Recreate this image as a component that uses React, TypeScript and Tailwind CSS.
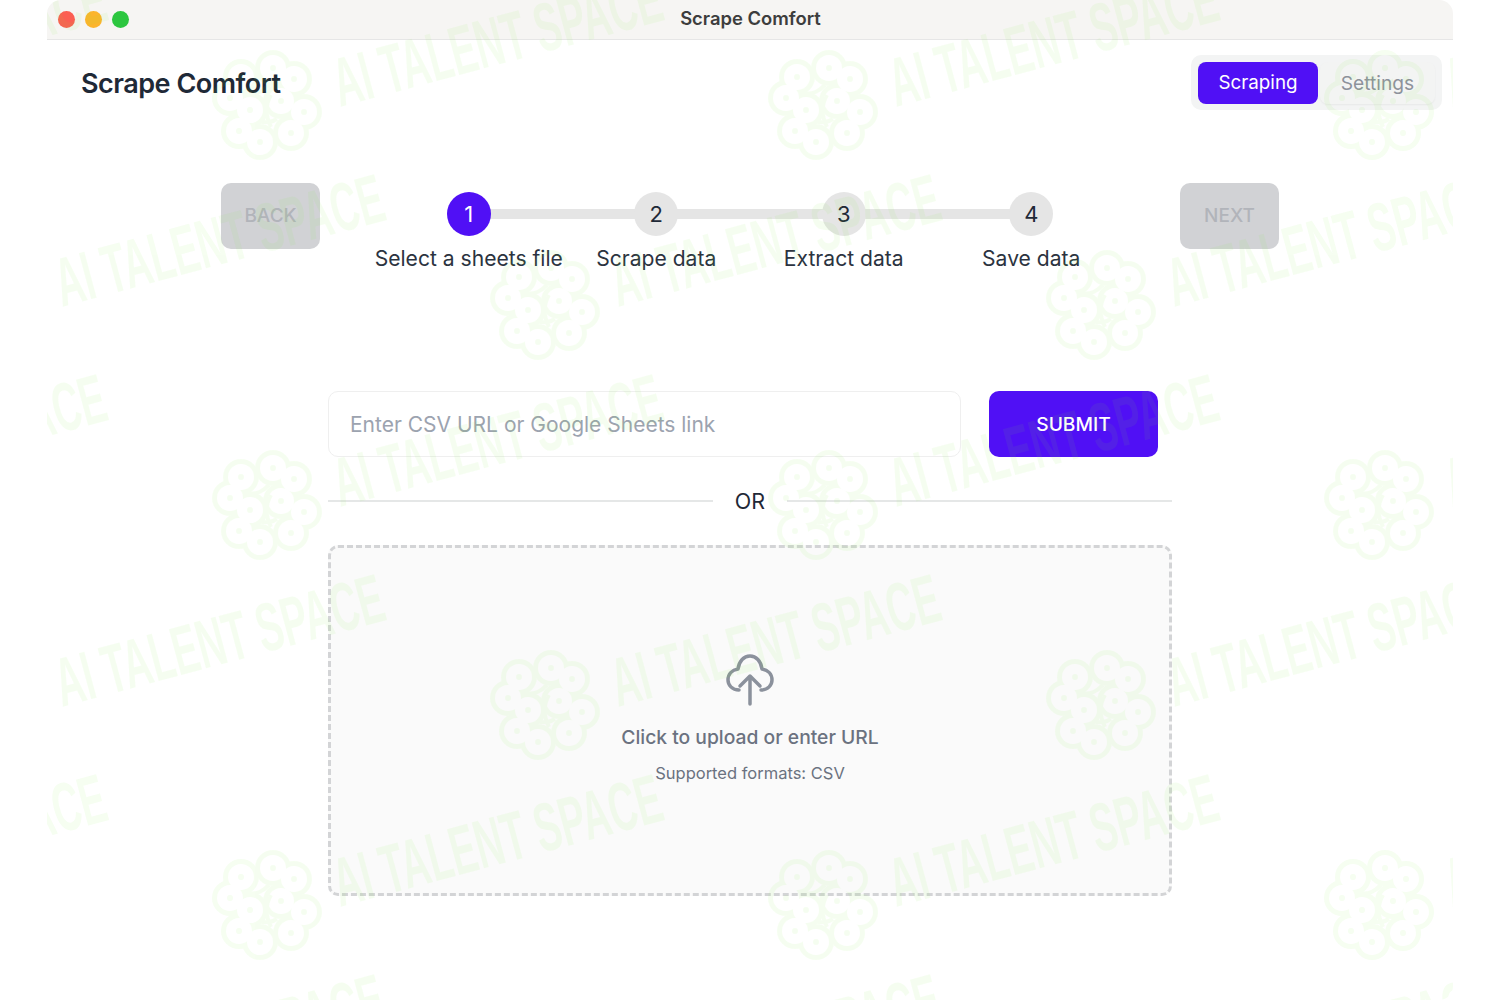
import React from 'react';

const steps = ['Select a sheets file', 'Scrape data', 'Extract data', 'Save data'];

// lobes of the watermark logo, relative to its centre
const lobes = [
  [-26, -28], [-37, -7], [-17, 5], [6, -37], [27, -26],
  [14, -4], [37, 7], [24, 28], [-28, 26], [-7, 37],
];

// watermark tiles are staggered: two logos per 556x400 cell
const marks: number[][] = [];
for (let row = 0; row < 6; row++) {
  for (let col = -1; col < 4; col++) {
    marks.push(row % 2 === 0 ? [267 + col * 556, 105 + (row / 2) * 400] : [545 + col * 556, 305 + ((row - 1) / 2) * 400]);
  }
}

const Watermark = () => (
  <svg
    className="absolute inset-0 pointer-events-none blur-[0.7px]"
    width={1406}
    height={1000}
    viewBox="47 0 1406 1000"
    fill="#7df03a"
    opacity={0.07}
  >
    <defs>
      <mask id="wm-mask" maskUnits="userSpaceOnUse" x={-70} y={-70} width={140} height={140}>
        {lobes.map(([x, y]) => <circle key={`o${x}${y}`} cx={x} cy={y} r={18} fill="#fff" />)}
        {lobes.map(([x, y]) => <circle key={`i${x}${y}`} cx={x} cy={y} r={13} fill="#000" />)}
        {lobes.map(([x, y]) => <circle key={`d${x}${y}`} cx={x} cy={y} r={3} fill="#fff" />)}
        <path d="M-20 -12 C-10 -10 -4 -14 2 -20 M4 -10 C-2 0 -2 10 4 22 M-8 16 C-2 18 4 18 10 14" fill="none" stroke="#fff" strokeWidth={4} />
      </mask>
      <g id="wm-logo" mask="url(#wm-mask)">
        <rect x={-70} y={-70} width={140} height={140} />
      </g>
    </defs>
    {marks.map(([x, y]) => (
      <g key={`${x}-${y}`}>
        <use href="#wm-logo" x={x} y={y} />
        <text
          transform={`translate(${x + 73} ${y + 2}) rotate(-15)`}
          fontFamily="'Liberation Sans', sans-serif"
          fontWeight={700}
          fontSize={69}
          textLength={338}
          lengthAdjust="spacingAndGlyphs"
        >
          AI TALENT SPACE
        </text>
      </g>
    ))}
  </svg>
);

const App = () => {
  return (
    <div className="w-[1500px] h-[1000px] bg-white px-[47px] font-['Inter',sans-serif] overflow-hidden">
      <div className="relative h-[1000px] rounded-[14px] overflow-hidden bg-white flex flex-col">
        {/* title bar */}
        <div className="h-[40px] shrink-0 bg-[#f6f5f3] border-b border-[#e6e6e6] flex items-center relative">
          <div className="flex gap-[10px] pl-[11px]">
            <span className="w-[17px] h-[17px] rounded-full bg-[#fb5f52]" />
            <span className="w-[17px] h-[17px] rounded-full bg-[#fcb42c]" />
            <span className="w-[17px] h-[17px] rounded-full bg-[#2cc63f]" />
          </div>
          <span className="flex-1 text-center text-[18.4px] font-semibold text-[#3d3d3d] pr-[81px] pb-[2px]">Scrape Comfort</span>
        </div>

        {/* header */}
        <div className="flex justify-between pl-[34px] pr-[11px] pt-[15px]">
          <h1 className="pt-[3px] text-[27px] leading-[52px] font-semibold text-[#1f2937] tracking-[-0.5px]">Scrape Comfort</h1>
          <div className="w-[251px] h-[55px] rounded-[10px] bg-[#f3f4f4] flex items-center p-[7px] gap-[2px]">
            <button className="w-[120px] h-[42px] pt-[1px] rounded-[8px] bg-[#5010f5] text-white text-[18.8px]">Scraping</button>
            <button className="w-[115px] h-[42px] pt-[1px] rounded-[8px] bg-[#f3f4f3] shadow-[0_1px_2px_rgba(0,0,0,0.05)] text-[#8d929b] text-[19.2px]">Settings</button>
          </div>
        </div>

        {/* stepper */}
        <div className="flex justify-center gap-[55px] mt-[73px]">
          <button className="w-[99px] h-[66px] rounded-[10px] bg-[#d1d2d5] text-[#b1b4ba] text-[19px] font-medium">BACK</button>
          <div className="flex w-[750px] pt-[9px]">
            {steps.map((label, i) => (
              <div key={label} className="relative w-[187.5px] flex flex-col items-center">
                {i < steps.length - 1 && (
                  <div className="absolute left-1/2 w-full top-[17px] h-[10px] bg-[#e5e5e5]" />
                )}
                <div
                  className={
                    i === 0
                      ? 'relative w-[44px] h-[44px] rounded-full bg-[#5010f5] text-white flex items-center justify-center text-[22px]'
                      : 'relative w-[44px] h-[44px] rounded-full bg-[#e5e5e5] text-[#1f2937] flex items-center justify-center text-[22px]'
                  }
                >
                  {i + 1}
                </div>
                <span className="mt-[9px] text-[21.1px] leading-[28px] text-[#2b3340] whitespace-nowrap">{label}</span>
              </div>
            ))}
          </div>
          <button className="w-[99px] h-[66px] rounded-[10px] bg-[#d1d2d5] text-[#b1b4ba] text-[19px] font-medium">NEXT</button>
        </div>

        {/* url + upload */}
        <div className="w-[844px] mx-auto mt-[118px]">
          <div className="flex gap-[28px]">
            <input
              className="w-[633px] h-[66px] rounded-[10px] border border-[#efefef] bg-white px-[21px] text-[21px] outline-none placeholder:text-[#9ca3af]"
              placeholder="Enter CSV URL or Google Sheets link"
            />
            <button className="w-[169px] h-[66px] rounded-[10px] bg-[#5010f5] text-white text-[19.2px] font-medium">SUBMIT</button>
          </div>

          <div className="flex items-center mt-[30px]">
            <div className="flex-1 h-[2px] bg-[#e5e7e7]" />
            <span className="w-[74px] text-center text-[21.5px] leading-[28px] text-[#1f2937]">OR</span>
            <div className="flex-1 h-[2px] bg-[#e5e7e7]" />
          </div>

          <div className="mt-[30px] h-[351px] rounded-[10px] border-[3px] border-dashed border-[#d3d4d6] bg-[#fafafa] flex flex-col items-center pt-[106px]">
            <svg width="48" height="52" viewBox="0 0 48 52" fill="none" stroke="#8b919c" strokeWidth="3.5" strokeLinecap="round" strokeLinejoin="round">
              <path d="M13 36C6 36 2 31 2 26C2 20 6 16 12 15C13 7 18 2 24 2C30 2 35 7 36 15C42 16 46 20 46 26C46 31 42 36 35 36" />
              <path d="M24 50V22M14 32L24 22L34 32" />
            </svg>
            <p className="mt-[17px] text-[19.3px] leading-[28px] font-medium text-[#6b7280]">Click to upload or enter URL</p>
            <p className="mt-[10px] text-[16.5px] leading-[24px] text-[#6b7280]">Supported formats: CSV</p>
          </div>
        </div>

        <Watermark />
      </div>
    </div>
  );
};

export default App;
